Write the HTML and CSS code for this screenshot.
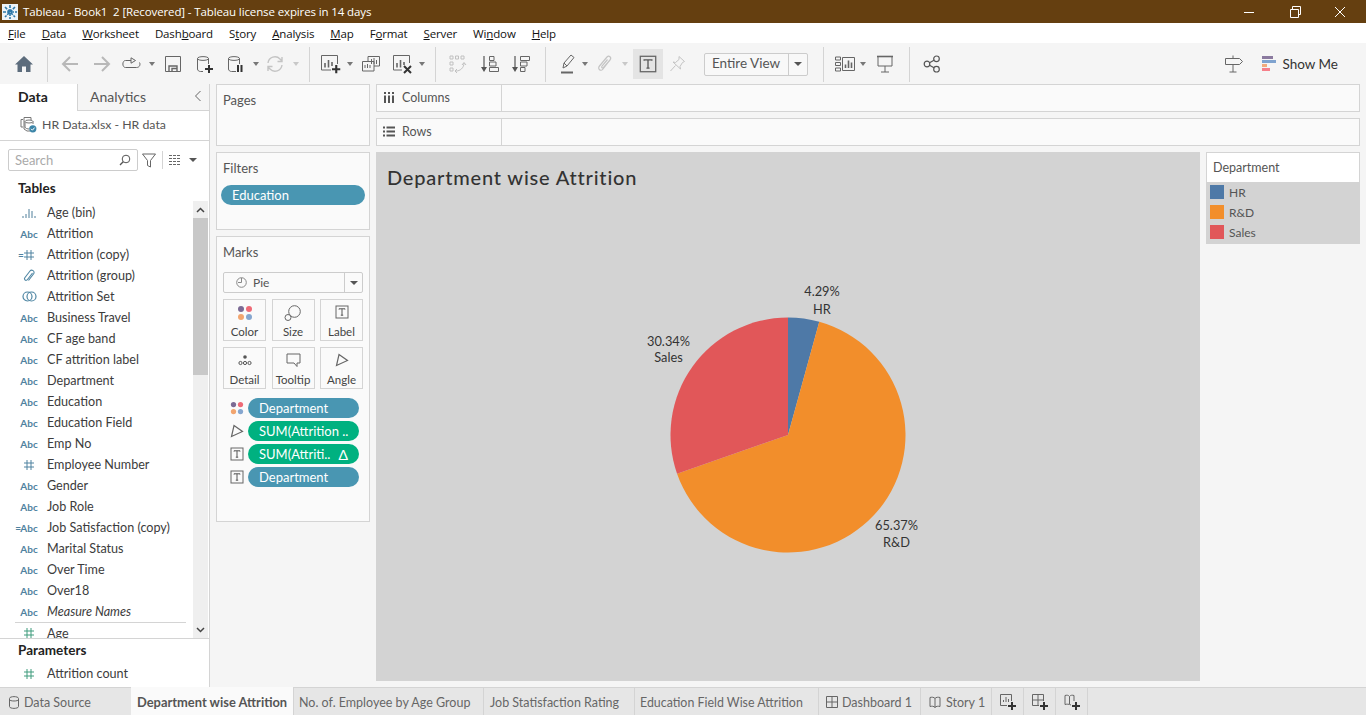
FILE: index.html
```html
<!DOCTYPE html>
<html lang="en">

<head>
    <meta charset="UTF-8">
    <title>Tableau - Book1 2 [Recovered]</title>
    <link rel="stylesheet" href="styles.css">
</head>

<body>
    <svg class="sprite" width="0" height="0">
        <symbol id="tbox" viewBox="0 0 14 14">
            <rect x="1" y="1" width="12" height="12" fill="none" stroke="#666"/>
            <path d="M4 4.5V3.8H10V4.5M7 3.8V10.2M5.8 10.2H8.2" fill="none" stroke="#555"/>
        </symbol>
        <symbol id="dots" viewBox="0 0 16 16">
            <circle cx="4" cy="4" r="3" fill="#7b6a94"/>
            <circle cx="12" cy="4" r="3" fill="#ee6a76"/>
            <circle cx="4" cy="12" r="3" fill="#f2a56f"/>
            <circle cx="12" cy="12" r="3" fill="#85a6cf"/>
        </symbol>
        <symbol id="angle" viewBox="0 0 14 14">
            <path d="M4 1.500L12.500 7.500L1.500 12.500Z" fill="none" stroke="#666" stroke-width="1.2"/>
        </symbol>
        <symbol id="hash" viewBox="0 0 12 12">
            <path d="M4 1V11M8 1V11M1 4H11M1 8H11" fill="none" stroke="currentColor"/>
        </symbol>
        <symbol id="plus" viewBox="0 0 8 8">
            <path d="M4 0V8M0 4H8" stroke="#333" stroke-width="2"/>
        </symbol>
    </svg>

    <div class="titlebar">
        <svg class="app-logo" width="16" height="16" viewBox="0 0 16 16">
            <rect width="16" height="16" fill="#eef4f8"/>
            <path d="M8 1V15M1 8H15M3 3L13 13M13 3L3 13" stroke="#2d78a8" stroke-width="1.6" stroke-dasharray="3 1"/>
        </svg>
        <span class="app-title">Tableau - Book1&nbsp; 2 [Recovered] - Tableau license expires in 14 days</span>
        <div class="win-controls">
            <svg width="46" height="20" viewBox="0 0 46 20"><path d="M18 10.5H28" stroke="#fff"/></svg>
            <svg width="46" height="20" viewBox="0 0 46 20"><path d="M18.5 7.5H26.5V15.5H18.5ZM20.5 7V4.5H28.5V12.5H27" fill="none" stroke="#fff"/></svg>
            <svg width="46" height="20" viewBox="0 0 46 20"><path d="M17 5L27 15M27 5L17 15" stroke="#fff"/></svg>
        </div>
    </div>

    <div class="menubar">
        <span><u>F</u>ile</span>
        <span><u>D</u>ata</span>
        <span><u>W</u>orksheet</span>
        <span>Dash<u>b</u>oard</span>
        <span>S<u>t</u>ory</span>
        <span><u>A</u>nalysis</span>
        <span><u>M</u>ap</span>
        <span>F<u>o</u>rmat</span>
        <span><u>S</u>erver</span>
        <span>Wi<u>n</u>dow</span>
        <span><u>H</u>elp</span>
    </div>

    <div class="toolbar">
        <div class="tb-group tb-home">
            <svg width="20" height="20" viewBox="0 0 20 20"><path d="M10 2L19 10.5H16.5V18H12V12.5H8V18H3.5V10.5H1Z" fill="#5c6c7c"/></svg>
        </div>
        <div class="tb-group tb-history">
            <svg width="20" height="20" viewBox="0 0 20 20"><path d="M18 10H3M10 3L3 10L10 17" fill="none" stroke="#b8b8b8" stroke-width="2"/></svg>
            <svg width="20" height="20" viewBox="0 0 20 20"><path d="M2 10H17M10 3L17 10L10 17" fill="none" stroke="#b8b8b8" stroke-width="2"/></svg>
            <svg width="20" height="20" viewBox="0 0 20 20"><path d="M10 6.5H4.5C1 6.5 1 13.5 4.5 13.5H15.500C19 13.500 19.500 10 18.500 8.500M10 3.8L14.5 6.5L10 9.2Z" fill="none" stroke="#666"/></svg>
            <i class="caret"></i>
            <svg width="18" height="18" viewBox="0 0 18 18"><path d="M1.5 1.5H16.5V16.5H1.5Z" fill="none" stroke="#666"/><path d="M5 16V11H13V16M8 16V13.5H13" fill="none" stroke="#666" stroke-width="1.4"/></svg>
            <svg width="20" height="20" viewBox="0 0 20 20"><path d="M8 17.500H5.5C4 17.500 2.500 16.500 2.500 15V4.500C2.500 2 13.500 2 13.500 4.500V10M2.500 4.500C2.500 7 13.500 7 13.500 4.500" fill="none" stroke="#666"/><use href="#plus" x="10" y="11" width="8" height="8"/></svg>
            <svg width="20" height="20" viewBox="0 0 20 20"><path d="M10 17.500H5.5C4 17.500 2.500 16.500 2.500 15V4.500C2.500 2 13.500 2 13.500 4.500V10M2.500 4.500C2.500 7 13.500 7 13.500 4.500" fill="none" stroke="#666"/><path d="M12 11V18M15.5 11V18" stroke="#333" stroke-width="2"/></svg>
            <i class="caret"></i>
            <svg width="20" height="20" viewBox="0 0 20 20"><path d="M3 9A7 7 0 0 1 15 5L17 7M17 11A7 7 0 0 1 5 15L3 13M17 3V7.5H12.5M3 17V12.5H7.5" fill="none" stroke="#c4c4c4" stroke-width="1.4"/></svg>
            <i class="caret caret-off"></i>
        </div>
        <div class="tb-group tb-sheets">
            <svg width="22" height="22" viewBox="0 0 22 22"><path d="M12 17H2.5V2.5H18.5V11" fill="none" stroke="#666"/><path d="M6 10V14.5M9.5 7V14.5M13 9V13" stroke="#666" stroke-width="1.6"/><use href="#plus" x="13" y="12" width="8.5" height="8.5"/></svg>
            <i class="caret"></i>
            <svg width="20" height="20" viewBox="0 0 20 20"><path d="M7 7V2.5H18.5V12H13M1.5 7.5H13V17H1.5Z" fill="#f5f5f5" stroke="#666"/><path d="M10.5 5V10M13 4V10M15.5 6V10M4 11V14M6.5 10V14M9 11V14" stroke="#666"/></svg>
            <svg width="22" height="22" viewBox="0 0 22 22"><path d="M11 17H2.5V2.5H18.5V10" fill="none" stroke="#666"/><path d="M6 10V14.5M9.5 7V14.5M13 9V12" stroke="#666" stroke-width="1.6"/><path d="M13 13L20 20M20 13L13 20" stroke="#333" stroke-width="2"/></svg>
            <i class="caret"></i>
        </div>
        <div class="tb-group tb-sort">
            <svg width="22" height="22" viewBox="0 0 22 22"><path d="M4 3H7V6H4ZM9.500 3H12.500V6H9.500ZM15 3H18V6H15ZM4 9H7V12H4ZM4 15H7V18H4Z" fill="none" stroke="#c0c0c0"/><path d="M10 18C14 18 18 15 18 10M16 12L18 9.500L20 12M11 16L9 18L11 20" fill="none" stroke="#c0c0c0"/></svg>
            <svg width="20" height="20" viewBox="0 0 20 20"><path d="M4 2V15" stroke="#555" stroke-width="1.2"/><path d="M1 13H7L4 18Z" fill="#555"/><path d="M9.500 2.500H14V6.500H9.500ZM9.500 8H16V12H9.500ZM9.500 13.500H18.500V17.500H9.500Z" fill="none" stroke="#666"/></svg>
            <svg width="20" height="20" viewBox="0 0 20 20"><path d="M4 2V15" stroke="#555" stroke-width="1.2"/><path d="M1 13H7L4 18Z" fill="#555"/><path d="M9.500 2.500H18.500V6.500H9.500ZM9.500 8H16V12H9.500ZM9.500 13.500H14V17.500H9.500Z" fill="none" stroke="#666"/></svg>
        </div>
        <div class="tb-group tb-format">
            <svg width="20" height="22" viewBox="0 0 20 22"><path d="M5 15L6 10L13 2L16 4.500L9 13ZM6 10L9 13" fill="none" stroke="#666"/><path d="M3 19.500H15" stroke="#666" stroke-width="2"/></svg>
            <i class="caret"></i>
            <svg width="20" height="20" viewBox="0 0 20 20"><path d="M15 6L8 15C6 18 2 15 4.500 12L12 3C14 1 17 3.500 15 6L8.500 13.500C7.500 14.500 6 13.500 7 12L12.500 5.500" fill="none" stroke="#c4c4c4" stroke-width="1.2"/></svg>
            <i class="caret caret-off"></i>
            <div class="tb-active"><svg width="18" height="18"><use href="#tbox" width="18" height="18"/></svg></div>
            <svg width="18" height="18" viewBox="0 0 18 18"><path d="M11 1.500L16.500 6.500L14.500 7.500L12 11.500L12.500 14L5 7L7.500 7.500L11 4.500ZM7.500 10.500L2.500 16" fill="none" stroke="#c4c4c4"/></svg>
            <div class="fit-select"><span class="fit-label">Entire View</span><span class="fit-arrow"><i class="caret caret-dark"></i></span></div>
        </div>
        <div class="tb-group tb-cards">
            <svg width="22" height="20" viewBox="0 0 22 20"><path d="M1.500 3H6.500V6H1.500ZM1.500 8.500H6.500V11.500H1.500ZM1.500 14H6.500V17H1.500ZM8.500 3.500H20.500V16.500H8.500Z" fill="none" stroke="#666"/><path d="M11.500 10.500V14M14.500 6.500V14M17.500 8.500V14" stroke="#666" stroke-width="1.6"/></svg>
            <i class="caret"></i>
            <svg width="18" height="20" viewBox="0 0 18 20"><path d="M1 2.500H17" stroke="#666" stroke-width="1.600"/><path d="M2 3V12H16V3M9 12V18M5 18H13" fill="none" stroke="#666"/></svg>
        </div>
        <div class="tb-group tb-share">
            <svg width="18" height="18" viewBox="0 0 18 18"><circle cx="4" cy="9" r="2.800" fill="none" stroke="#555" stroke-width="1.200"/><circle cx="13.500" cy="3.800" r="2.800" fill="none" stroke="#555" stroke-width="1.200"/><circle cx="13.500" cy="14.200" r="2.800" fill="none" stroke="#555" stroke-width="1.200"/><path d="M6.500 7.700L11 5.200M6.500 10.300L11 12.800" stroke="#555" stroke-width="1.200"/></svg>
        </div>
        <div class="tb-right">
            <svg width="20" height="20" viewBox="0 0 20 20"><path d="M1.500 4.500H15.500L18.500 7.500L15.500 10.500H1.500Z" fill="none" stroke="#666"/><path d="M9 1.500V4.500M9 10.500V18M5.500 18H12.500" fill="none" stroke="#666"/></svg>
            <svg class="showme-icon" width="15" height="16" viewBox="0 0 15 16">
                <rect width="11" height="3" fill="#8b7a9f"/>
                <rect y="4" width="14" height="3" fill="#7fa3cf"/>
                <rect y="8" width="5" height="3" fill="#f2ab7c"/>
                <rect y="12" width="8" height="3" fill="#f6808a"/>
            </svg>
            <span>Show Me</span>
        </div>
    </div>

    <div class="main">
        <aside class="sidebar">
            <div class="side-tabs">
                <div class="side-tab side-tab-on">Data</div>
                <div class="side-tab">Analytics<svg class="collapse" width="8" height="12" viewBox="0 0 8 12"><path d="M6.500 1L1.500 6L6.500 11" fill="none" stroke="#666"/></svg></div>
            </div>
            <div class="source-row">
                <svg width="17" height="17" viewBox="0 0 17 17"><path d="M3 3.500H1V11H3M4 1.500H11V4M4 1.500V13L7 15H10" fill="none" stroke="#777"/><ellipse cx="9" cy="5.500" rx="4" ry="1.500" fill="#fff" stroke="#777"/><path d="M5 5.500V11C5 12.500 8 13 9 13M13 5.500V8" fill="none" stroke="#777"/><circle cx="12.800" cy="12.800" r="3.600" fill="#3c85a8"/><path d="M11 12.800L12.400 14.200L14.600 11.600" fill="none" stroke="#fff"/></svg>
                <span>HR Data.xlsx - HR data</span>
            </div>
            <div class="search-row">
                <div class="search-box">
                    <span>Search</span>
                    <svg width="12" height="12" viewBox="0 0 12 12"><circle cx="7" cy="5" r="3.800" fill="none" stroke="#555"/><path d="M4.200 7.800L1 11" stroke="#555" stroke-width="1.300"/></svg>
                </div>
                <svg class="funnel" width="14" height="15" viewBox="0 0 14 15"><path d="M.5 1H13.500L8.500 7.500V14L5.500 12.500V7.500Z" fill="none" stroke="#666"/></svg>
                <i class="vsep"></i>
                <svg class="grid-icon" width="12" height="10" viewBox="0 0 12 10"><path d="M0 .5H12M0 3.500H12M0 6.500H12M0 9.500H12" fill="none" stroke="#666" stroke-dasharray="3 1"/></svg>
                <i class="caret caret-dark"></i>
            </div>
            <div class="side-head">Tables</div>
            <div class="field-pane">
                <div class="field-list">
                    <div class="field"><b class="f-icon"><svg width="14" height="10" viewBox="0 0 14 10"><path d="M1 8V10M4 6V10M7 1V10M10 3V10M13 8V10" stroke="#4f7f9a"/></svg></b>Age (bin)</div>
                    <div class="field"><b class="f-icon">Abc</b>Attrition</div>
                    <div class="field"><b class="f-icon"><em class="f-eq">=</em><svg width="12" height="12" class="f-hash"><use href="#hash" width="12" height="12"/></svg></b>Attrition (copy)</div>
                    <div class="field"><b class="f-icon"><svg width="13" height="14" viewBox="0 0 13 14"><path d="M9.500 4L4.500 10.500C3 12.500 .5 10.500 2 8.500L7 2C8.500 0 12.500 2 10.500 5L5.500 11.500" fill="none" stroke="#4f86a3" stroke-width="1.100"/></svg></b>Attrition (group)</div>
                    <div class="field"><b class="f-icon"><svg width="15" height="13" viewBox="0 0 15 13"><circle cx="5.500" cy="6.500" r="4.500" fill="none" stroke="#4f86a3" stroke-width="1.200"/><circle cx="9.500" cy="6.500" r="4.500" fill="none" stroke="#4f86a3" stroke-width="1.200"/></svg></b>Attrition Set</div>
                    <div class="field"><b class="f-icon">Abc</b>Business Travel</div>
                    <div class="field"><b class="f-icon">Abc</b>CF age band</div>
                    <div class="field"><b class="f-icon">Abc</b>CF attrition label</div>
                    <div class="field"><b class="f-icon">Abc</b>Department</div>
                    <div class="field"><b class="f-icon">Abc</b>Education</div>
                    <div class="field"><b class="f-icon">Abc</b>Education Field</div>
                    <div class="field"><b class="f-icon">Abc</b>Emp No</div>
                    <div class="field"><b class="f-icon"><svg width="12" height="12" class="f-hash"><use href="#hash" width="12" height="12"/></svg></b>Employee Number</div>
                    <div class="field"><b class="f-icon">Abc</b>Gender</div>
                    <div class="field"><b class="f-icon">Abc</b>Job Role</div>
                    <div class="field"><b class="f-icon"><em class="f-eq">=</em>Abc</b>Job Satisfaction (copy)</div>
                    <div class="field"><b class="f-icon">Abc</b>Marital Status</div>
                    <div class="field"><b class="f-icon">Abc</b>Over Time</div>
                    <div class="field"><b class="f-icon">Abc</b>Over18</div>
                    <div class="field field-it"><b class="f-icon">Abc</b>Measure Names</div>
                    <div class="field field-rule"><b class="f-icon"><svg width="12" height="12" class="f-hash f-green"><use href="#hash" width="12" height="12"/></svg></b>Age</div>
                </div>
                <div class="scrollbar">
                    <div class="sb-btn"><svg width="9" height="6" viewBox="0 0 9 6"><path d="M1 5L4.500 1.500L8 5" fill="none" stroke="#444" stroke-width="1.500"/></svg></div>
                    <div class="sb-thumb"></div>
                    <div class="sb-track"></div>
                    <div class="sb-btn"><svg width="9" height="6" viewBox="0 0 9 6"><path d="M1 1L4.500 4.500L8 1" fill="none" stroke="#444" stroke-width="1.500"/></svg></div>
                </div>
            </div>
            <div class="params">
                <div class="side-head">Parameters</div>
                <div class="field"><b class="f-icon"><svg width="12" height="12" class="f-hash f-green"><use href="#hash" width="12" height="12"/></svg></b>Attrition count</div>
            </div>
        </aside>

        <div class="cards">
            <section class="card card-pages"><h4>Pages</h4></section>
            <section class="card card-filters">
                <h4>Filters</h4>
                <div class="pill pill-filter">Education</div>
            </section>
            <section class="card card-marks">
                <h4>Marks</h4>
                <div class="mark-type">
                    <svg width="11" height="11" viewBox="0 0 11 11"><circle cx="5.500" cy="5.500" r="4.800" fill="none" stroke="#888"/><path d="M5.500 1V5.500H2" fill="none" stroke="#888"/></svg>
                    <span>Pie</span>
                    <span class="mark-arrow"><i class="caret caret-dark"></i></span>
                </div>
                <div class="mark-grid">
                    <div class="mark-btn"><svg width="16" height="16"><use href="#dots" width="16" height="16"/></svg>Color</div>
                    <div class="mark-btn"><svg width="18" height="16" viewBox="0 0 18 16"><circle cx="10.500" cy="6.500" r="5.800" fill="none" stroke="#666"/><circle cx="4" cy="12.500" r="3" fill="#fafafa" stroke="#666"/></svg>Size</div>
                    <div class="mark-btn"><svg width="14" height="14"><use href="#tbox" width="14" height="14"/></svg>Label</div>
                    <div class="mark-btn"><svg width="14" height="14" viewBox="0 0 14 14"><circle cx="7" cy="4" r="1.800" fill="#555"/><circle cx="2.500" cy="10" r="1.600" fill="none" stroke="#555"/><circle cx="7" cy="10" r="1.600" fill="none" stroke="#555"/><circle cx="11.500" cy="10" r="1.600" fill="none" stroke="#555"/></svg>Detail</div>
                    <div class="mark-btn"><svg width="15" height="14" viewBox="0 0 15 14"><path d="M1 1H14V10H11V13.500L8 10H1Z" fill="none" stroke="#666"/></svg>Tooltip</div>
                    <div class="mark-btn"><svg width="14" height="14"><use href="#angle" width="14" height="14"/></svg>Angle</div>
                </div>
                <div class="shelf-row"><svg width="14" height="14"><use href="#dots" width="14" height="14"/></svg><div class="pill">Department</div></div>
                <div class="shelf-row"><svg width="14" height="14"><use href="#angle" width="14" height="14"/></svg><div class="pill pill-green">SUM(Attrition ..</div></div>
                <div class="shelf-row"><svg width="14" height="14"><use href="#tbox" width="14" height="14"/></svg><div class="pill pill-green"><span>SUM(Attriti..</span><span class="delta">&#916;</span></div></div>
                <div class="shelf-row"><svg width="14" height="14"><use href="#tbox" width="14" height="14"/></svg><div class="pill">Department</div></div>
            </section>
        </div>

        <div class="workspace">
            <div class="shelf">
                <div class="shelf-label">
                    <svg width="12" height="11" viewBox="0 0 12 11"><path d="M2 3.500V11M6 3.500V11M10 3.500V11" stroke="#555" stroke-width="2"/><path d="M2 0V2M6 0V2M10 0V2" stroke="#555" stroke-width="2"/></svg>
                    Columns
                </div>
            </div>
            <div class="shelf">
                <div class="shelf-label">
                    <svg width="12" height="11" viewBox="0 0 12 11"><path d="M0 1.500H2M3.500 1.500H12M0 5.500H2M3.500 5.500H12M0 9.500H2M3.500 9.500H12" stroke="#555" stroke-width="2"/></svg>
                    Rows
                </div>
            </div>
            <div class="view-row">
                <div class="viz">
                    <h2 class="viz-title">Department wise Attrition</h2>
                    <div class="viz-chart">
                        <svg width="824" height="492" viewBox="-412 -246 824 492">
                            <path d="M0 0V-117.500A117.500 117.500 0 0 1 31.280 -113.260Z" fill="#4e79a7"/>
                            <path d="M0 0L31.280 -113.260A117.500 117.500 0 1 1 -110.940 38.700Z" fill="#f28e2b"/>
                            <path d="M0 0L-110.940 38.700A117.500 117.500 0 0 1 0 -117.500Z" fill="#e15759"/>
                            <text class="pie-label" x="34" y="-139">4.29%</text>
                            <text class="pie-label" x="34" y="-121">HR</text>
                            <text class="pie-label" x="-119.500" y="-89">30.34%</text>
                            <text class="pie-label" x="-119.500" y="-73">Sales</text>
                            <text class="pie-label" x="108.500" y="95">65.37%</text>
                            <text class="pie-label" x="108.500" y="112">R&amp;D</text>
                        </svg>
                    </div>
                </div>
                <div class="legend">
                    <div class="legend-head">Department</div>
                    <div class="legend-body">
                        <div class="legend-item"><i class="swatch swatch-hr"></i>HR</div>
                        <div class="legend-item"><i class="swatch swatch-rd"></i>R&amp;D</div>
                        <div class="legend-item"><i class="swatch swatch-sales"></i>Sales</div>
                    </div>
                </div>
            </div>
        </div>
    </div>

    <div class="tabbar">
        <div class="tab tab-source"><svg width="10" height="13" viewBox="0 0 10 13"><path d="M.5 2.500V10.500C.5 13 9.500 13 9.500 10.500V2.500C9.500 0 .5 0 .5 2.500ZM.5 3.500C.5 5.500 9.500 5.500 9.500 3.500" fill="none" stroke="#666"/></svg>Data Source</div>
        <div class="tab tab-on">Department wise Attrition</div>
        <div class="tab tab-age">No. of. Employee by Age Group</div>
        <div class="tab tab-job">Job Statisfaction Rating</div>
        <div class="tab tab-edu">Education Field Wise Attrition</div>
        <div class="tab tab-dash"><svg width="12" height="12" viewBox="0 0 12 12"><path d="M.5 .5H11.500V11.500H.5ZM.5 6H11.500M6 .5V11.500" fill="none" stroke="#666"/></svg>Dashboard 1</div>
        <div class="tab tab-story"><svg width="12" height="12" viewBox="0 0 12 12"><path d="M6 2.500C5 1 2.500 1 1 1.500V10.500C2.500 10 5 10 6 11.500C7 10 9.500 10 11 10.500V1.500C9.500 1 7 1 6 2.500ZM6 2.500V11.500" fill="none" stroke="#666"/></svg>Story 1</div>
        <div class="tab tab-new"><svg width="16" height="16" viewBox="0 0 16 16"><path d="M7 11.500H.5V.5H11.500V7" fill="none" stroke="#666"/><path d="M3.500 8V6M6 8V3M8.500 8V5" stroke="#666"/><use href="#plus" x="8" y="8" width="8" height="8"/></svg></div>
        <div class="tab tab-new"><svg width="16" height="16" viewBox="0 0 16 16"><path d="M7 11.500H.5V.5H11.500V7M.5 6H11.500M6 .5V11.500" fill="none" stroke="#666"/><use href="#plus" x="8" y="8" width="8" height="8"/></svg></div>
        <div class="tab tab-new"><svg width="16" height="16" viewBox="0 0 16 16"><path d="M7 11C5 10 2.500 10 1 10.500V1.500C2.500 1 4.500 1 5.500 2.500C6.500 1 8.500 1 10 1.500V7M5.500 2.500V10" fill="none" stroke="#666"/><use href="#plus" x="8" y="8" width="8" height="8"/></svg></div>
    </div>
</body>

</html>
```

FILE: styles.css
```css
* {
    box-sizing: border-box;
}

html,
body {
    margin: 0;
    height: 100%;
    overflow: hidden;
}

body {
    font-family: Lato, "Open Sans", sans-serif;
    font-size: 13px;
    color: #444;
    display: flex;
    flex-direction: column;
    background-color: #f5f5f5;
}

.sprite {
    position: absolute;
}

svg {
    display: block;
    flex: none;
}

/* window chrome */
.titlebar {
    height: 23px;
    flex: none;
    display: flex;
    align-items: center;
    padding-left: 2px;
    background-color: #653f10;
    color: #fff;
    font-family: "Open Sans", sans-serif;
    font-size: 11.5px;
    letter-spacing: -0.12px;
}

.app-title {
    margin-left: 5px;
    white-space: pre;
}

.win-controls {
    margin-left: auto;
    margin-right: 2px;
    display: flex;
}

.menubar {
    height: 20px;
    flex: none;
    display: flex;
    align-items: center;
    gap: 16px;
    padding-left: 8px;
    background-color: #fff;
    color: #111;
    font-family: "Open Sans", sans-serif;
    font-size: 11.5px;
    letter-spacing: -0.14px;
}

/* toolbar */
.toolbar {
    height: 41px;
    flex: none;
    display: flex;
    padding-top: 4px;
    padding-bottom: 2px;
}

.tb-group {
    display: grid;
    grid-auto-flow: column;
    align-items: center;
    justify-items: center;
    border-right: 1px solid #d4d4d4;
    height: 35px;
    padding-bottom: 1px;
}

.tb-home {
    width: 48px;
    padding-left: 9px;
    grid-template-columns: 30px;
}

.tb-history {
    width: 262px;
    padding-left: 6px;
    grid-template-columns: 32px 32px 26px 16px 26px 38px 24px 16px 22px 20px;
}

.tb-sheets {
    width: 126px;
    padding-left: 4px;
    grid-template-columns: 32px 8px 34px 28px 12px;
}

.tb-sort {
    width: 110px;
    padding-left: 6px;
    grid-template-columns: 30px 36px 26px;
}

.tb-format {
    width: 278px;
    padding-left: 8px;
    grid-template-columns: 28px 6px 34px 6px 35px 28px 104px;
}

.tb-cards {
    width: 86px;
    padding-left: 6px;
    grid-template-columns: 30px 6px 38px;
}

.tb-share {
    border-right: 0;
    padding-left: 7px;
    grid-template-columns: 30px;
}

.tb-active {
    justify-self: end;
    width: 30px;
    height: 30px;
    display: flex;
    align-items: center;
    justify-content: center;
    background-color: #e4e4e4;
}

.caret {
    display: block;
    width: 0;
    height: 0;
    border-left: 3.5px solid transparent;
    border-right: 3.5px solid transparent;
    border-top: 4px solid #777;
}

.caret-off {
    border-top-color: #c8c8c8;
}

.caret-dark {
    border-left-width: 4px;
    border-right-width: 4px;
    border-top: 4px solid #555;
}

.fit-select {
    justify-self: start;
    margin-left: 13px;
    width: 104px;
    height: 23px;
    display: flex;
    border: 1px solid #ccc;
    border-radius: 2px;
    background-color: #f8f8f8;
    color: #555;
    font-size: 13.5px;
}

.fit-label {
    flex: 1;
    line-height: 19px;
    padding-left: 7px;
}

.fit-arrow {
    width: 19px;
    display: flex;
    align-items: center;
    justify-content: center;
    border-left: 1px solid #ccc;
}

.tb-right {
    margin-left: auto;
    height: 35px;
    display: flex;
    align-items: center;
    padding-right: 28px;
    padding-bottom: 2px;
    font-size: 13.5px;
    color: #333;
}

.showme-icon {
    margin-left: 18px;
    margin-right: 5px;
}

/* main area */
.main {
    flex: 1;
    min-height: 0;
    display: flex;
}

.sidebar {
    width: 210px;
    flex: none;
    display: flex;
    flex-direction: column;
    background-color: #fff;
    border-right: 1px solid #d4d4d4;
}

.side-tabs {
    height: 27px;
    flex: none;
    display: flex;
    font-size: 14px;
}

.side-tab {
    flex: 1;
    display: flex;
    align-items: center;
    padding-left: 12px;
    padding-bottom: 2px;
    background-color: #f5f5f5;
    border-left: 1px solid #d4d4d4;
    border-bottom: 1px solid #d4d4d4;
    color: #555;
}

.side-tab-on {
    flex: none;
    width: 77px;
    padding-left: 18px;
    background-color: #fff;
    border: 0;
    color: #222;
    font-weight: 700;
}

.collapse {
    margin-left: auto;
    margin-right: 7px;
}

.source-row {
    height: 30px;
    flex: none;
    display: flex;
    align-items: center;
    gap: 5px;
    padding-left: 20px;
    padding-bottom: 3px;
    border-bottom: 1px solid #d4d4d4;
    color: #555;
    font-size: 12.3px;
}

.search-row {
    flex: none;
    display: flex;
    align-items: center;
    padding: 8px 0 0 8px;
}

.search-box {
    width: 130px;
    height: 22px;
    display: flex;
    align-items: center;
    justify-content: space-between;
    padding: 0 6px;
    border: 1px solid #ccc;
    border-radius: 2px;
    color: #aaa;
}

.funnel {
    margin-left: 4px;
}

.vsep {
    width: 1px;
    height: 18px;
    margin: 0 6px;
    background-color: #d4d4d4;
}

.grid-icon {
    margin-right: 8px;
}

.side-head {
    flex: none;
    height: 22px;
    padding-left: 18px;
    line-height: 22px;
    color: #222;
    font-size: 13.5px;
    font-weight: 700;
}

.search-row + .side-head {
    margin-top: 6px;
    margin-bottom: 2px;
}

.field-pane {
    flex: 1;
    min-height: 0;
    display: flex;
}

.field-list {
    flex: 1;
    min-width: 0;
    padding-top: 1px;
    overflow: hidden;
}

.field {
    height: 21px;
    display: flex;
    align-items: center;
    padding-left: 15px;
    color: #3c3c3c;
    font-size: 12.6px;
    white-space: nowrap;
}

.field-it {
    font-style: italic;
}

.field-rule {
    border-top: 1px solid #d4d4d4;
    margin: 0 7px 0 15px;
    padding-left: 0;
}

.params .field {
    margin-top: 2px;
}

.f-icon {
    width: 32px;
    padding-right: 4px;
    flex: none;
    display: flex;
    align-items: center;
    justify-content: center;
    color: #4f82a0;
    font-size: 10px;
    font-weight: 700;
    font-style: normal;
}

.f-eq {
    display: block;
    width: 5px;
    margin-left: -5px;
    font-style: normal;
}

.f-hash {
    color: #4f82a0;
}

.f-green {
    color: #3e9b7d;
}

.scrollbar {
    width: 15px;
    margin-right: 1px;
    flex: none;
    display: flex;
    flex-direction: column;
    background-color: #efefef;
}

.sb-btn {
    height: 17px;
    flex: none;
    display: flex;
    align-items: center;
    justify-content: center;
}

.sb-thumb {
    height: 157px;
    flex: none;
    background-color: #c8c8c8;
}

.sb-track {
    flex: 1;
}

.params {
    height: 49px;
    flex: none;
    border-top: 1px solid #d4d4d4;
}

/* pages, filters, marks */
.cards {
    width: 160px;
    flex: none;
    padding-left: 6px;
    display: flex;
    flex-direction: column;
    gap: 6px;
}

.card {
    width: 154px;
    background-color: #fafafa;
    border: 1px solid #d4d4d4;
}

.card h4 {
    margin: 0;
    padding: 7px 6px 0;
    font-weight: 400;
    font-size: 13px;
    line-height: 16px;
    color: #555;
}

.card-pages {
    height: 62px;
}

.card-filters {
    height: 78px;
}

.card-marks {
    height: 286px;
    padding: 0 6px;
}

.card-marks h4 {
    padding-left: 0;
}

.pill {
    flex: 1;
    height: 20px;
    display: flex;
    align-items: center;
    justify-content: space-between;
    padding: 0 11px;
    border-radius: 10px;
    background-color: #4996b2;
    color: #fff;
    white-space: nowrap;
}

.pill-filter {
    margin: 9px 4px 0;
}

.pill-green {
    background-color: #00b180;
}

.delta {
    font-size: 14px;
}

.mark-type {
    height: 21px;
    margin-top: 12px;
    display: flex;
    align-items: center;
    gap: 6px;
    padding-left: 12px;
    border: 1px solid #ccc;
    border-radius: 2px;
    font-size: 12px;
    color: #555;
}

.mark-arrow {
    margin-left: auto;
    width: 18px;
    height: 100%;
    display: flex;
    align-items: center;
    justify-content: center;
    border-left: 1px solid #ccc;
}

.mark-grid {
    display: grid;
    grid-template-columns: 43px 43px 43px;
    grid-auto-rows: 42px;
    justify-content: space-between;
    row-gap: 6px;
    margin-top: 6px;
    margin-bottom: 9px;
}

.mark-btn {
    display: flex;
    flex-direction: column;
    align-items: center;
    justify-content: space-between;
    padding: 5px 0 2px;
    border: 1px solid #d4d4d4;
    font-size: 11.5px;
    color: #444;
}

.shelf-row {
    height: 20px;
    margin-bottom: 3px;
    display: flex;
    align-items: center;
    margin-right: 4px;
}

.shelf-row svg {
    margin: 0 4px 0 7px;
}

/* columns, rows, view */
.workspace {
    flex: 1;
    min-width: 0;
    padding: 0 6px 6px;
    display: flex;
    flex-direction: column;
    gap: 6px;
}

.shelf {
    height: 28px;
    flex: none;
    background-color: #fafafa;
    border: 1px solid #d4d4d4;
}

.shelf-label {
    width: 125px;
    height: 100%;
    display: flex;
    align-items: center;
    gap: 7px;
    padding-left: 6px;
    padding-bottom: 1px;
    border-right: 1px solid #d4d4d4;
    font-size: 12.5px;
    color: #555;
}

.view-row {
    flex: 1;
    min-height: 0;
    display: flex;
    gap: 6px;
}

.viz {
    flex: 1;
    min-width: 0;
    display: flex;
    flex-direction: column;
    background-color: #d3d3d3;
}

.viz-title {
    height: 37px;
    flex: none;
    margin: 0;
    padding: 11px 0 0 11px;
    font-size: 20px;
    font-weight: 500;
    letter-spacing: 0.8px;
    line-height: 28px;
    color: #333;
}

.viz-chart {
    flex: 1;
}

.pie-label {
    font-size: 12.8px;
    fill: #333;
    text-anchor: middle;
}

.legend {
    width: 154px;
    flex: none;
}

.legend-head {
    height: 30px;
    padding-left: 6px;
    line-height: 30px;
    background-color: #fff;
    border: 1px solid #d4d4d4;
    border-bottom: 0;
    color: #555;
    font-size: 12.5px;
}

.legend-body {
    height: 62px;
    background-color: #d3d3d3;
}

.legend-item {
    height: 20px;
    display: flex;
    align-items: center;
    gap: 5px;
    padding-left: 4px;
    font-size: 12px;
    color: #555;
}

.swatch {
    width: 14px;
    height: 14px;
}

.swatch-hr {
    background-color: #4e79a7;
}

.swatch-rd {
    background-color: #f28e2b;
}

.swatch-sales {
    background-color: #e15759;
}

/* sheet tabs */
.tabbar {
    height: 28px;
    flex: none;
    display: flex;
    background-color: #e6e6e6;
    border-top: 1px solid #d4d4d4;
    color: #666;
    font-size: 12.5px;
}

.tab {
    flex: none;
    display: flex;
    align-items: center;
    gap: 5px;
    padding-top: 1px;
    padding-left: 6px;
    white-space: nowrap;
    border-right: 1px solid #d4d4d4;
}

.tab-source {
    width: 131px;
    border-right: 0;
    padding-left: 9px;
}

.tab-on {
    width: 163px;
    margin-top: -1px;
    background-color: #fafafa;
    font-size: 12.9px;
    font-weight: 700;
    color: #555;
}

.tab-age {
    width: 190px;
    padding-left: 5px;
}

.tab-job {
    width: 151px;
}

.tab-edu {
    width: 184px;
    padding-left: 5px;
    font-size: 12.4px;
}

.tab-dash {
    width: 102px;
    padding-left: 7px;
    gap: 4px;
}

.tab-story {
    width: 71px;
    padding-left: 8px;
}

.tab-new {
    width: 32px;
    padding-left: 8px;
}
```
